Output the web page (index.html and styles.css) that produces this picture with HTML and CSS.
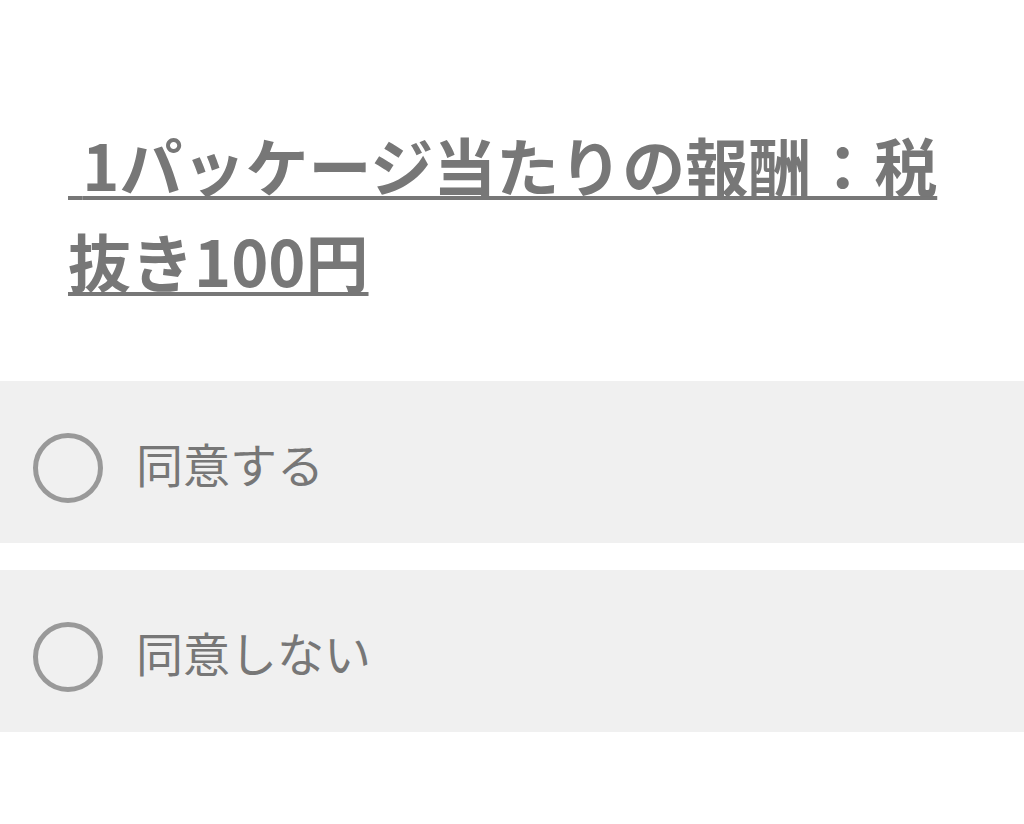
FILE: index.html
```html
<!DOCTYPE html>
<html lang="ja">
<head>
    <meta charset="UTF-8">
    <title>報酬の同意</title>
    <link rel="stylesheet" href="styles.css">
</head>
<body>
    <div class="question">
        <h2 class="questionTitle"><span class="underline"> 1パッケージ当たりの報酬：税抜き100円</span></h2>
    </div>
    <div class="choices">
        <label class="choice">
            <input type="radio" name="agree" value="yes">
            <span class="radioMark"></span>
            <span class="choiceLabel">同意する</span>
        </label>
        <label class="choice">
            <input type="radio" name="agree" value="no">
            <span class="radioMark"></span>
            <span class="choiceLabel">同意しない</span>
        </label>
    </div>
</body>
</html>
```

FILE: styles.css
```css
body {
    margin: 0;
    background: #ffffff;
    color: #777777;
    font-family: "Noto Sans CJK JP", "Noto Sans", sans-serif;
}
.question {
    padding: 116px 68px 0 68px;
}
.questionTitle {
    margin: 0;
    font-size: 63px;
    font-weight: bold;
    line-height: 96px;
    white-space: pre-wrap;
}
.underline {
    text-decoration: underline;
    text-decoration-thickness: 4px;
    text-underline-offset: 5px;
}
.choices {
    margin-top: 73px;
    display: flex;
    flex-direction: column;
    gap: 27px;
}
.choice {
    display: flex;
    align-items: center;
    height: 162px;
    background-color: #f0f0f0;
    padding-left: 33px;
    box-sizing: border-box;
}
.choice input {
    display: none;
}
.radioMark {
    width: 70px;
    height: 70px;
    box-sizing: border-box;
    border: 5px solid #999999;
    border-radius: 50%;
    margin-top: 12px;
    flex-shrink: 0;
}
.choiceLabel {
    margin-left: 33px;
    font-size: 47px;
    color: #777777;
}
```
